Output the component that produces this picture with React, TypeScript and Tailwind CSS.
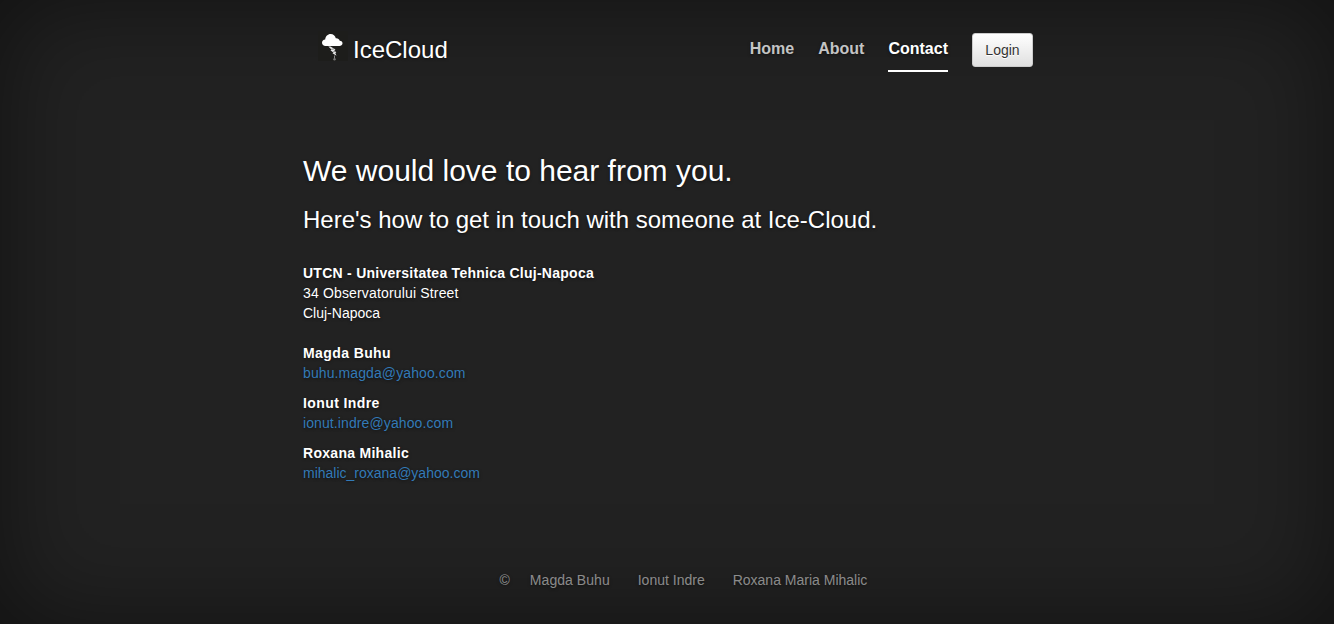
import React from "react";

const people = [
  { name: "Magda Buhu", email: "buhu.magda@yahoo.com", nameClass: "tracking-[0.4px]", emailClass: "tracking-[0.1px]" },
  { name: "Ionut Indre", email: "ionut.indre@yahoo.com", nameClass: "tracking-[0.4px]", emailClass: "tracking-[0.1px]" },
  { name: "Roxana Mihalic", email: "mihalic_roxana@yahoo.com", nameClass: "tracking-[0.29px]", emailClass: "tracking-normal" },
];

function Logo() {
  return (
    <svg width="30" height="30" viewBox="0 0 30 30" aria-hidden="true">
      <rect width="30" height="30" fill="#1d1d1b" />
      <path d="M7.500 15C5.500 15 4 13.700 4 11.800C4 10 5.300 8.700 7.200 8.500C7.500 5.300 9.800 3 12.600 3C15.300 3 17.200 4.700 17.800 7.300C19.800 7.100 21.300 8.200 21.700 9.800C23.500 9.900 24.700 11 24.500 12.500C24.300 14 23 15 21.500 15Z" fill="#fff" />
      <path d="M10.300 15.500L12.500 15.500L17.500 18.600L16.300 19.300L18.300 21.500L17.300 22L18.500 24.800L14.500 22.200L15.300 21.500L12.500 19.200L13.500 18.600Z" fill="#e8e8e8" />
      <path d="M13.500 18.300L16.500 17.800M15 21L17.500 20.300" stroke="#444" strokeWidth="0.600" fill="none" />
      <path d="M16.500 24.500V29" stroke="#888" strokeWidth="1" fill="none" />
      <circle cx="16.500" cy="28.300" r="1.200" fill="#777" />
    </svg>
  );
}

export default function App() {
  return (
    <div className="flex h-[624px] flex-col bg-[#222] font-['Liberation_Sans',Arial,sans-serif] text-sm leading-5 text-white shadow-[inset_0_0_100px_rgba(0,0,0,0.5)] [text-shadow:0_1px_3px_rgba(0,0,0,0.5)]">
      <div className="mx-auto flex w-[730px] grow flex-col">
        <header className="flex h-[72px] items-start justify-between pt-[31px]">
          <div className="flex pl-4">
            <Logo />
            <span className="pt-1.5 pl-[5px] text-2xl leading-[26px]">IceCloud</span>
          </div>
          <nav className="-mr-px flex pt-0.5 text-base leading-5 font-bold">
            <a className="pt-1.5 text-white/75">Home</a>
            <a className="ml-6 pt-1.5 text-white/75">About</a>
            <a className="ml-6 h-[39px] border-b-2 border-white pt-1.5">Contact</a>
            <button className="ml-6 h-[34px] w-[61px] rounded-[3px] border border-[#ccc] bg-linear-to-b from-white to-[#e0e0e0] text-sm font-normal text-[#333] [text-shadow:0_1px_0_#fff]">Login</button>
          </nav>
        </header>
        <main className="px-px pt-[82px]">
          <h1 className="text-[30px] leading-[33px]">We would love to hear from you.</h1>
          <h2 className="mt-5 text-2xl leading-[26px]">Here's how to get in touch with someone at Ice-Cloud.</h2>
          <address className="mt-[30px] not-italic">
            <strong className="tracking-[0.26px]">UTCN - Universitatea Tehnica Cluj-Napoca</strong>
            <br />
            <span className="tracking-[0.16px]">34 Observatorului Street</span>
            <br />
            Cluj-Napoca
          </address>
          <div className="mt-5 flex flex-col gap-2.5">
            {people.map((p) => (
              <div key={p.email}>
                <strong className={p.nameClass}>{p.name}</strong>
                <br />
                <a className={`text-[#337ab7] ${p.emailClass}`}>{p.email}</a>
              </div>
            ))}
          </div>
        </main>
        <footer className="mt-auto flex gap-7 pb-[34px] pl-[197.5px] whitespace-nowrap text-white/50">
          <span className="-mr-2">©</span>
          <span className="tracking-[0.05px]">Magda Buhu</span>
          <span>Ionut Indre</span>
          <span>Roxana Maria Mihalic</span>
        </footer>
      </div>
    </div>
  );
}
